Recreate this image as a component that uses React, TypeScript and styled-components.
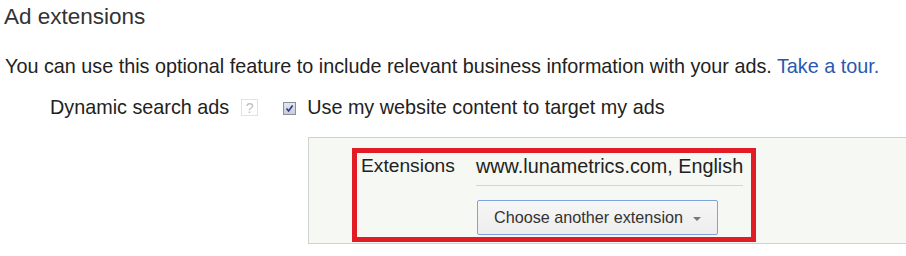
import React from "react";
import styled, { createGlobalStyle } from "styled-components";

const Global = createGlobalStyle`
  html, body { margin: 0; padding: 0; background: #fff; }
  body { font-family: "Liberation Sans", Arial, sans-serif; color: #222; }
`;

const Page = styled.div`
  width: 906px;
  height: 256px;
  overflow: hidden;
  padding: 0 0 0 4px;
  box-sizing: border-box;
`;

const Heading = styled.h2`
  margin: 0;
  padding-top: 4px;
  font-weight: normal;
  font-size: 22.5px;
  line-height: 26px;
  color: #333;
`;

const Intro = styled.p`
  margin: 24px 0 0 1px;
  font-size: 19.8px;
  line-height: 24px;
  color: #222;
  white-space: nowrap;
`;

const Link = styled.a`
  color: #2a58b0;
  text-decoration: none;
`;

const OptionRow = styled.div`
  display: flex;
  align-items: center;
  margin: 17px 0 0 46px;
  font-size: 19.8px;
  line-height: 24px;
`;

const Label = styled.span`
  color: #222;
`;

const Help = styled.span`
  display: inline-flex;
  align-items: center;
  justify-content: center;
  width: 15px;
  height: 15px;
  margin-left: 12px;
  margin-top: 1px;
  border: 1px solid #e2e2e2;
  color: #bdbdbd;
  font-size: 14px;
  line-height: 1;
`;

const Check = styled.span`
  display: inline-flex;
  align-items: center;
  justify-content: center;
  width: 11px;
  height: 11px;
  margin-left: 25px;
  margin-top: 2px;
  border: 1px solid #8a8f9a;
  background: linear-gradient(#e4e6ee, #c9cdd9);
`;

const CheckText = styled.span`
  margin-left: 11px;
`;

const Panel = styled.div`
  margin: 18px -2px 0 304px;
  height: 107px;
  box-sizing: border-box;
  border: 1px solid #cfd2cd;
  border-right: none;
  background: #f5f8f3;
  padding: 10px 0 0 43px;
`;

const Highlight = styled.div`
  width: 404px;
  height: 94px;
  box-sizing: border-box;
  border: 5px solid #e21c25;
  display: grid;
  grid-template-columns: 115px 1fr;
  padding: 1px 8px 0 4px;
`;

const FieldLabel = styled.div`
  font-size: 19.2px;
  line-height: 24px;
  color: #222;
`;

const FieldBody = styled.div`
  display: flex;
  flex-direction: column;
  align-items: flex-start;
`;

const Value = styled.div`
  font-size: 19.8px;
  line-height: 24px;
  color: #222;
  padding-bottom: 7px;
  border-bottom: 1px solid #d4d6d3;
  width: 267px;
  white-space: nowrap;
`;

const Button = styled.button`
  margin-top: 14px;
  margin-left: 1px;
  width: 241px;
  height: 35px;
  box-sizing: border-box;
  border: 1px solid #7ea2dc;
  border-radius: 2px;
  background: linear-gradient(#f6f6f6, #ededed);
  font-family: "Liberation Sans", Arial, sans-serif;
  font-size: 16.2px;
  color: #333;
  display: flex;
  align-items: center;
  justify-content: flex-start;
  gap: 10px;
  padding: 0 0 0 16px;
`;

const Caret = styled.span`
  width: 0;
  height: 0;
  border-left: 4.5px solid transparent;
  border-right: 4.5px solid transparent;
  border-top: 4.5px solid #777;
  margin-top: 2px;
`;

export default function App() {
  return (
    <Page>
      <Global />
      <Heading>Ad extensions</Heading>
      <Intro>
        You can use this optional feature to include relevant business information with your ads.{" "}
        <Link href="#">Take a tour.</Link>
      </Intro>
      <OptionRow>
        <Label>Dynamic search ads</Label>
        <Help>?</Help>
        <Check>
          <svg width="9" height="9" viewBox="0 0 9 9">
            <path d="M1.5 4.5 L3.6 7 L7.6 1.5" fill="none" stroke="#2b3a8c" strokeWidth="1.6" />
          </svg>
        </Check>
        <CheckText>Use my website content to target my ads</CheckText>
      </OptionRow>
      <Panel>
        <Highlight>
          <FieldLabel>Extensions</FieldLabel>
          <FieldBody>
            <Value>www.lunametrics.com, English</Value>
            <Button>
              Choose another extension <Caret />
            </Button>
          </FieldBody>
        </Highlight>
      </Panel>
    </Page>
  );
}
